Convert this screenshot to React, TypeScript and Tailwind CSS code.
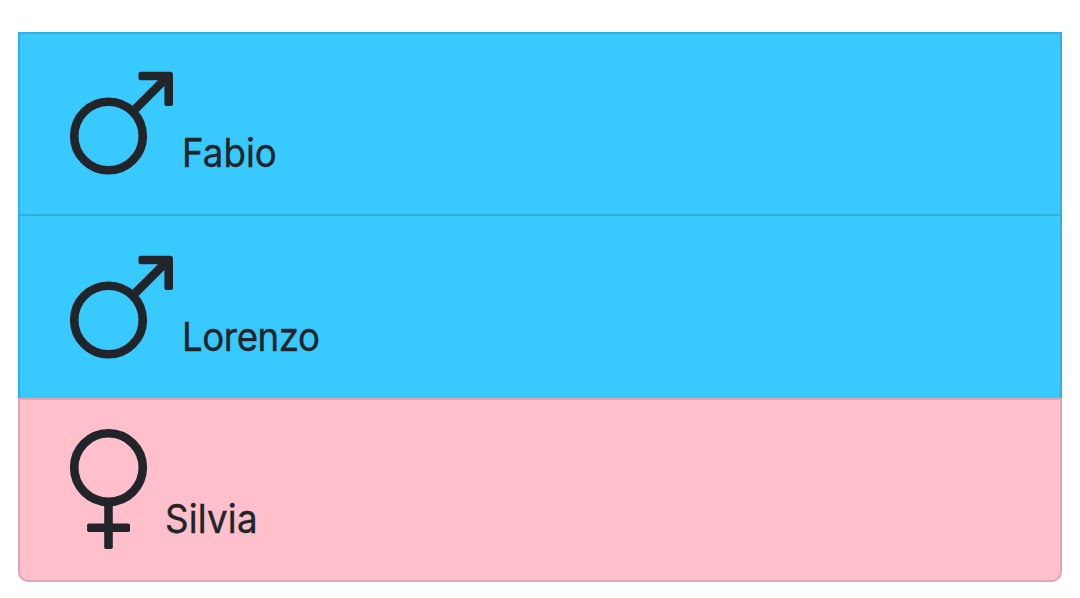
type Person = { name: string; gender: "male" | "female"; tracking: string };

function Mars() {
  return (
    <svg width="105" height="104" viewBox="69 71 105 104" fill="none" stroke="#212529" strokeWidth="8.6" className="block shrink-0">
      <circle cx="108.5" cy="136" r="34.3" />
      <path d="M135.2 109.1 167.5 76.8" />
      <path d="M140.2 71.7h29.8q3 0 3 3v29.6q0 1.7-1.7 1.7h-5.2q-1.7 0-1.7-1.7V80.3h-24.2q-1.7 0-1.7-1.7v-5.2q0-1.7 1.7-1.7Z" fill="#212529" stroke="none" />
    </svg>
  );
}

function Venus() {
  return (
    <svg width="79" height="121" viewBox="69 429 79 121" fill="#212529" className="block shrink-0">
      <circle cx="108.5" cy="467.6" r="34.3" fill="none" stroke="#212529" strokeWidth="8.6" />
      <rect x="104.2" y="502" width="8.6" height="47" rx="1.8" />
      <rect x="87.1" y="523.4" width="42.9" height="8.6" rx="1.8" />
    </svg>
  );
}

function Row({ person, className }: { person: Person; className: string }) {
  const male = person.gender === "male";
  return (
    <li className={`flex items-start border-[rgba(0,0,0,0.125)] pl-[49px] ${className}`}>
      <span className={male ? "pt-[37px]" : "pt-[29px]"}>{male ? <Mars /> : <Venus />}</span>
      <span className={male ? "ml-2 pt-[88.5px]" : "ml-[16.5px] pt-[88.5px]"}>
        <span className={`block origin-left scale-x-[0.94] text-[39px] leading-[60px] [-webkit-text-stroke:0.4px_#212529] ${person.tracking}`}>{person.name}</span>
      </span>
    </li>
  );
}

export default function App() {
  return (
    <main className="h-[598px] bg-white px-[18px] pt-8 font-['Inter',sans-serif] text-[#212529]">
      <ul className="flex flex-col">
        <Row person={{ name: "Fabio", gender: "male", tracking: "tracking-[0.05px]" }} className="h-[184px] border-2 bg-[#38caff]" />
        <Row person={{ name: "Lorenzo", gender: "male", tracking: "tracking-[-0.45px]" }} className="h-[182px] border-x-2 bg-[#38caff] pt-[2px]" />
        <Row person={{ name: "Silvia", gender: "female", tracking: "tracking-[0.2px]" }} className="h-[184px] rounded-b-[10px] border-2 bg-[#ffbfcb]" />
      </ul>
    </main>
  );
}
